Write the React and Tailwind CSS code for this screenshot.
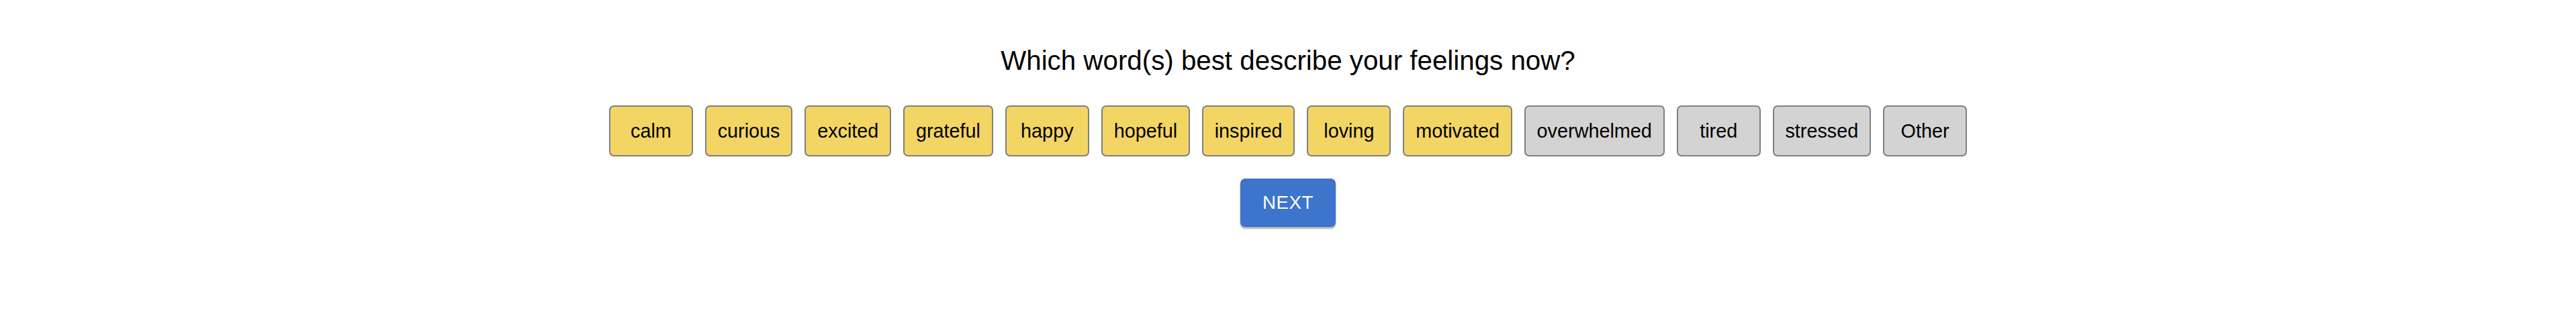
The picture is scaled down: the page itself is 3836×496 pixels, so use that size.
const FEELINGS = [
  { label: 'calm', selected: true },
  { label: 'curious', selected: true },
  { label: 'excited', selected: true },
  { label: 'grateful', selected: true },
  { label: 'happy', selected: true },
  { label: 'hopeful', selected: true },
  { label: 'inspired', selected: true },
  { label: 'loving', selected: true },
  { label: 'motivated', selected: true },
  { label: 'overwhelmed', selected: false },
  { label: 'tired', selected: false },
  { label: 'stressed', selected: false },
  { label: 'Other', selected: false },
]

function FeelingChip({ label, selected }) {
  return (
    <button
      type="button"
      className={`h-[76px] min-w-[125px] rounded-[7px] border-[2.4px] border-[#808080] px-[16.8px] text-[28.8px] leading-[33px] text-black ${selected ? 'bg-[#f3d564]' : 'bg-[#d3d3d3]'}`}
    >
      {label}
    </button>
  )
}

export default function App() {
  return (
    <div className="flex min-h-[496px] w-full flex-col items-center bg-white pt-[68px] font-['Liberation_Sans',Arial,sans-serif]">
      <h1 className="text-[40.3px] leading-[46px] font-normal text-black">Which word(s) best describe your feelings now?</h1>
      <div className="mt-[43px] flex items-center gap-[18px]">
        {FEELINGS.map((f) => <FeelingChip key={f.label} {...f} />)}
      </div>
      <button
        type="button"
        className="mt-[33px] flex h-[72px] w-[142px] items-center justify-center rounded-[7px] bg-[#3d74cc] text-[27.7px] tracking-[0.5px] text-white shadow-[0_3px_2px_rgba(0,0,0,0.25),0_0_4px_rgba(0,0,0,0.12)]"
      >
        NEXT
      </button>
    </div>
  )
}
